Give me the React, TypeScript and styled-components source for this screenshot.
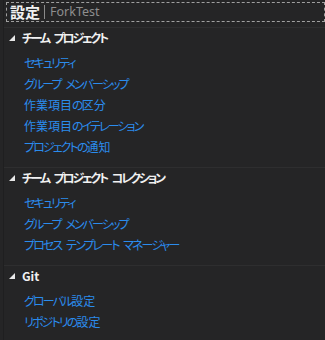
import React from "react";
import styled, { createGlobalStyle } from "styled-components";

const Global = createGlobalStyle`
  html, body { margin: 0; padding: 0; background: #252526; }
  body { width: 325px; height: 340px; overflow: hidden; }
`;

const Page = styled.div`
  width: 325px;
  height: 340px;
  box-sizing: border-box;
  background: #252526;
  padding-left: 3px;
  font-family: "Noto Sans CJK JP", "Noto Sans", sans-serif;
  font-feature-settings: "palt";
`;

const Panel = styled.div`
  height: 100%;
  border-left: 1px solid #1f1f20;
  display: flex;
  flex-direction: column;
`;

const Header = styled.div`
  margin: 2px 0 5px 2px;
  height: 20px;
  box-sizing: border-box;
  border: 1px dashed #a0a0a0;
  display: flex;
  align-items: center;
  padding-left: 3px;
`;

const Title = styled.span`
  color: #f1f1f1;
  font-weight: 700;
  font-size: 15px;
  line-height: 18px;
`;

const Sep = styled.span`
  width: 1px;
  height: 14px;
  background: #8a8a8a;
  margin: 0 5px 0 4px;
`;

const Sub = styled.span`
  color: #8e8e8e;
  font-family: "Noto Sans", "Open Sans", sans-serif;
  font-size: 12.5px;
  line-height: 18px;
`;

const Section = styled.section`
  border-top: 1px solid #2e2e2f;
  padding-bottom: 10px;
`;

const Heading = styled.div`
  height: 19px;
  display: flex;
  align-items: center;
  padding-left: 5px;
  gap: 7px;
  color: #f1f1f1;
  font-weight: 700;
  font-size: 12px;
  white-space: nowrap;
  word-spacing: 2px;
`;

const Items = styled.ul`
  list-style: none;
  margin: 5px 0 0 0;
  padding: 0 0 0 20px;
`;

const Item = styled.li`
  height: 21px;
  line-height: 21px;
  color: #2b8ced;
  font-size: 12px;
  white-space: nowrap;
  word-spacing: 2px;
`;

const Kana = styled.span<{ $bold?: boolean }>`
  letter-spacing: ${(p) => (p.$bold ? "-2.2px" : "-1.9px")};
`;

const Arrow = () => (
  <svg width="6" height="6" viewBox="0 0 6 6">
    <polygon points="6,0 6,6 0,6" fill="#e8e8e8" />
  </svg>
);

const KanaText = ({ text, bold }: { text: string; bold?: boolean }) => (
  <>
    {text.split(/([\u3040-\u30FF]+)/).map((part, i) =>
      /^[\u3040-\u30FF]+$/.test(part) ? (
        <Kana key={i} $bold={bold}>
          {part}
        </Kana>
      ) : (
        <React.Fragment key={i}>{part}</React.Fragment>
      )
    )}
  </>
);

const sections = [
  {
    title: "チーム プロジェクト",
    items: [
      "セキュリティ",
      "グループ メンバーシップ",
      "作業項目の区分",
      "作業項目のイテレーション",
      "プロジェクトの通知",
    ],
  },
  {
    title: "チーム プロジェクト コレクション",
    items: ["セキュリティ", "グループ メンバーシップ", "プロセス テンプレート マネージャー"],
  },
  {
    title: "Git",
    items: ["グローバル設定", "リポジトリの設定"],
  },
];

export default function App() {
  return (
    <>
      <Global />
      <Page>
        <Panel>
          <Header>
            <Title>設定</Title>
            <Sep />
            <Sub>ForkTest</Sub>
          </Header>
          {sections.map((s) => (
            <Section key={s.title}>
              <Heading>
                <Arrow />
                <span>
                  <KanaText text={s.title} bold />
                </span>
              </Heading>
              <Items>
                {s.items.map((it) => (
                  <Item key={it}>
                    <KanaText text={it} />
                  </Item>
                ))}
              </Items>
            </Section>
          ))}
        </Panel>
      </Page>
    </>
  );
}
